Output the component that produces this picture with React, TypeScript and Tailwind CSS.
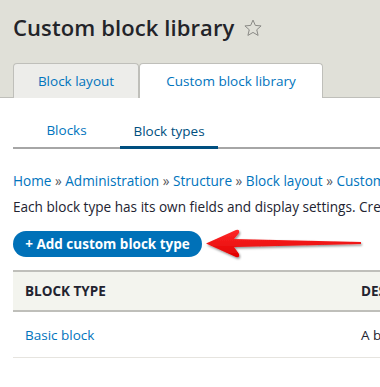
import React from "react";

export default function App() {
  const font = { fontFamily: '"Open Sans", "DejaVu Sans", sans-serif' };
  return (
    <div className="w-[380px] h-[387px] overflow-hidden bg-white" style={font}>
      <div className="bg-[#e0e0d8] pt-[12px] pl-[13px] border-b border-[#bfbfba] w-[700px]">
        <div className="flex items-center h-[30px] gap-[9px]">
          <h1 className="text-[22px] font-semibold text-[#232429] leading-none whitespace-nowrap tracking-[0.1px]">
            Custom block library
          </h1>
          <svg width="20" height="20" viewBox="0 0 24 24" className="mt-[1px]">
            <path
              d="M12 2.5l2.8 6.4 6.9.6-5.2 4.6 1.6 6.8L12 17.3l-6.1 3.6 1.6-6.8-5.2-4.6 6.9-.6z"
              fill="none"
              stroke="#8a8a86"
              strokeWidth="1.2"
              strokeLinejoin="round"
            />
          </svg>
        </div>
        <div className="flex mt-[21px] -mb-px">
          <div className="w-[126px] h-[35px] flex items-center justify-center bg-[#ededea] border border-b-0 border-[#bfbfba] rounded-t-[4px] text-[13.5px] text-[#0074bd]">
            Block layout
          </div>
          <div className="w-[184px] h-[35px] flex items-center justify-center bg-white border border-b-0 border-[#bfbfba] rounded-t-[4px] text-[13.5px] text-[#0074bd]">
            Custom block library
          </div>
        </div>
      </div>

      <div className="pl-[13px]">
        <div className="flex border-b-2 border-[#a6a6a6] w-[700px] mt-[15px] h-[36px]">
          <div className="w-[107px] flex items-center justify-center text-[13.5px] text-[#0074bd] pt-[1px]">
            Blocks
          </div>
          <div className="w-[98px] flex items-center justify-center text-[13.5px] text-[#004f80] border-b-[3px] border-[#004f80] -mb-[2px] pt-[4px]">
            Block types
          </div>
        </div>

        <div className="mt-[23px] text-[13.6px] text-[#0074bd] whitespace-nowrap leading-[18px]">
          <span>Home</span> <span className="text-[#55565b]">»</span> <span>Administration</span>{" "}
          <span className="text-[#55565b]">»</span> <span>Structure</span>{" "}
          <span className="text-[#55565b]">»</span> <span>Block layout</span>{" "}
          <span className="text-[#55565b]">»</span> <span>Custom block library</span>
        </div>
        <div className="mt-[8px] text-[13.6px] text-[#222330] whitespace-nowrap leading-[18px]">
          Each block type has its own fields and display settings. Create and manage fields and display settings for each type.
        </div>

        <div className="flex items-center mt-[11px] h-[34px]">
          <div className="h-[26px] w-[189px] rounded-full bg-[#0071b8] flex items-center justify-center text-white font-bold text-[13.5px] whitespace-nowrap">
            + Add custom block type
          </div>
          <svg width="165" height="34" viewBox="0 0 165 34" className="ml-[1px]">
            <defs>
              <filter id="sh" x="-10%" y="-30%" width="130%" height="170%">
                <feDropShadow dx="1" dy="1.5" stdDeviation="1" floodColor="#000" floodOpacity="0.45" />
              </filter>
              <linearGradient id="rg" x1="0" y1="0" x2="0" y2="1">
                <stop offset="0" stopColor="#ff2a2a" />
                <stop offset="1" stopColor="#e00000" />
              </linearGradient>
            </defs>
            <path
              d="M3 16.5 L33 3 Q37 2 36 6 L31 12 L158 15 L158 17 L31 20 L36 27 Q37 31 33 30 Z"
              fill="url(#rg)"
              filter="url(#sh)"
            />
          </svg>
        </div>

        <div className="mt-[9px] w-[700px]">
          <div className="h-[42px] bg-[#f3f4ee] border-t-2 border-b-2 border-[#bfbfba] flex items-center text-[13.5px] font-bold text-[#222330]">
            <div className="pl-[12px] w-[348px]">BLOCK TYPE</div>
            <div>DESCRIPTION</div>
          </div>
          <div className="h-[46px] border-b border-[#e6e4df] flex items-center text-[13.5px] pt-[2px]">
            <div className="pl-[12px] w-[348px] text-[#0074bd]">Basic block</div>
            <div className="text-[#222330]">A basic block contains a title and a body.</div>
          </div>
        </div>
      </div>
    </div>
  );
}
